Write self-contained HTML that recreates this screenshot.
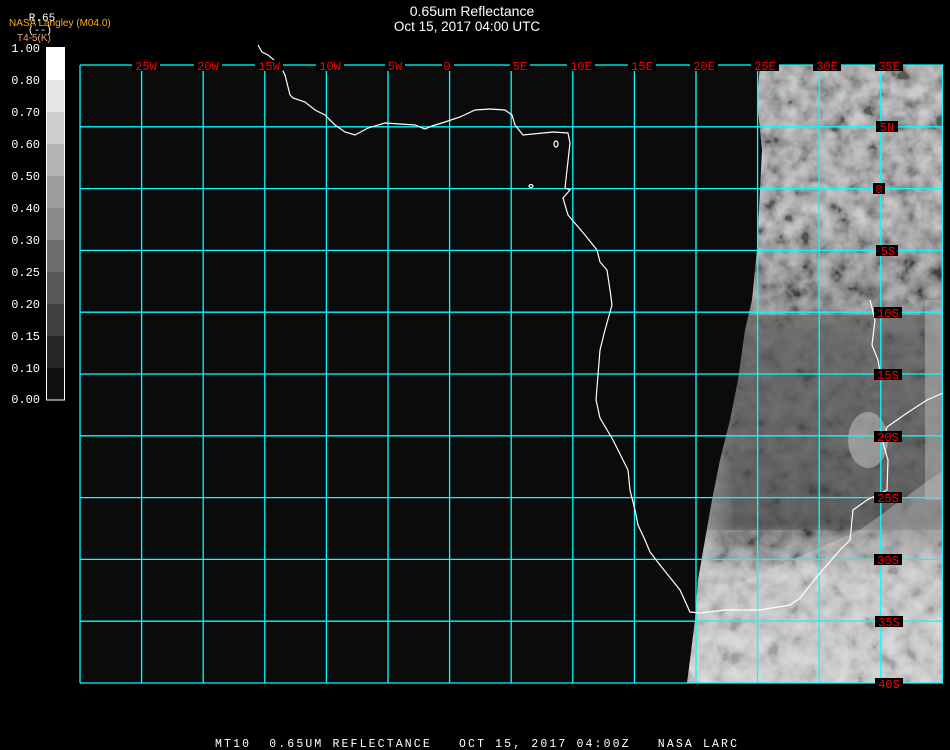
<!DOCTYPE html>
<html><head><meta charset="utf-8"><style>
html,body{margin:0;padding:0;background:#000;width:950px;height:750px;overflow:hidden}
svg{display:block}
</style></head><body>
<svg width="950" height="750" viewBox="0 0 950 750" xmlns="http://www.w3.org/2000/svg">
<defs>
<linearGradient id="g" x1="0" y1="0" x2="0" y2="1">
<stop offset="0" stop-color="#a0a0a0"/>
<stop offset="0.25" stop-color="#a0a0a0"/>
<stop offset="0.33" stop-color="#7a7a7a"/>
<stop offset="0.45" stop-color="#5e5e5e"/>
<stop offset="0.62" stop-color="#585858"/>
<stop offset="0.74" stop-color="#505050"/>
<stop offset="0.82" stop-color="#b8b8b8"/>
<stop offset="1" stop-color="#c8c8c8"/>
</linearGradient>
<linearGradient id="edge" x1="0" y1="0" x2="1" y2="0">
<stop offset="0" stop-color="#ccc" stop-opacity="0.7"/>
<stop offset="1" stop-color="#ccc" stop-opacity="0"/>
</linearGradient>
<filter id="t" x="0" y="0" width="100%" height="100%">
<feTurbulence type="fractalNoise" baseFrequency="0.06" numOctaves="3" seed="4"/>
<feColorMatrix type="matrix" values="0.33 0.33 0.33 0 0 0.33 0.33 0.33 0 0 0.33 0.33 0.33 0 0 0 0 0 0 1"/>
<feComponentTransfer><feFuncR type="linear" slope="3" intercept="-1"/><feFuncG type="linear" slope="3" intercept="-1"/><feFuncB type="linear" slope="3" intercept="-1"/></feComponentTransfer>
</filter>
<clipPath id="c"><polygon points="760,65 757,100 762,150 760,190 757,250 752,300 745,330 738,380 730,420 720,460 712,500 705,540 698,580 695,620 690,660 687,683 943,683 943,65"/></clipPath>
</defs>
<rect x="80" y="65" width="863" height="618" fill="#0b0b0b"/>
<g clip-path="url(#c)">
<rect x="680" y="65" width="270" height="620" fill="url(#g)"/>
<rect x="680" y="65" width="270" height="250" filter="url(#t)" opacity="0.45"/>
<rect x="680" y="530" width="270" height="155" filter="url(#t)" opacity="0.35"/>
<rect x="680" y="315" width="270" height="215" filter="url(#t)" opacity="0.12"/>
<rect x="690" y="280" width="45" height="300" fill="url(#edge)"/>
<ellipse cx="868" cy="440" rx="20" ry="28" fill="#ccc" opacity="0.5"/>
<polygon points="700,600 860,530 943,470 943,683 690,683" fill="#ddd" opacity="0.35"/>
<rect x="925" y="300" width="18" height="200" fill="#bbb" opacity="0.5"/>
</g>
<g stroke="#00ffff" stroke-width="1.3" fill="none">
<path d="M80,65V683M141.6,65V683M203.2,65V683M264.8,65V683M326.4,65V683M388,65V683M449.6,65V683M511.2,65V683M572.8,65V683M634.4,65V683M696,65V683M757.6,65V683M819.2,65V683M880.8,65V683M942.4,65V683"/>
<path d="M80,65H943M80,126.8H943M80,188.6H943M80,250.4H943M80,312.2H943M80,374H943M80,435.8H943M80,497.6H943M80,559.4H943M80,621.2H943M80,683H943"/>
</g>
<g stroke="#fff" stroke-width="1.2" fill="none">
<polyline points="258,45 262,52 268,55 280,65 285,75 287,83 290,95 293,98 305,102 315,110 325,115 335,125 345,132 355,135 368,128 385,123 400,124 415,125 425,129 432,126 445,122 460,117 475,110 490,109 505,110 512,115 515,125 523,135 553,132 568,133 570,143 567,170 565,188 570,190 563,198 568,215 585,235 597,250 600,262 607,270 610,290 612,305 605,330 600,350 598,375 596,400 600,418 613,440 628,470 630,490 635,510 638,525 645,540 650,552 660,565 668,575 680,590 690,612 700,613 725,610 760,610 790,605 800,598 820,573 840,550 850,540 853,510 867,500 887,490 888,460 883,443 887,427 907,413 927,400 943,393"/>
<ellipse cx="556" cy="144" rx="2" ry="3"/>
<ellipse cx="531" cy="186" rx="2" ry="1.5"/>
<polyline points="870,300 875,320 872,345 878,360 880,372"/>
</g>
<g font-family="Liberation Mono, monospace" font-size="12" fill="#ff0000" text-anchor="middle">
<g fill="#000"><rect x="132" y="60" width="28" height="11"/><rect x="194" y="60" width="28" height="11"/><rect x="255" y="60" width="28" height="11"/><rect x="316" y="60" width="28" height="11"/><rect x="385" y="60" width="20" height="11"/><rect x="442" y="60" width="12" height="11"/><rect x="510" y="60" width="20" height="11"/><rect x="567" y="60" width="28" height="11"/><rect x="628" y="60" width="28" height="11"/><rect x="690" y="60" width="28" height="11"/><rect x="751" y="60" width="28" height="11"/><rect x="813" y="60" width="28" height="11"/><rect x="875" y="60" width="28" height="11"/>
<rect x="876" y="121" width="22" height="11"/><rect x="873" y="183" width="12" height="11"/><rect x="876" y="245" width="22" height="11"/><rect x="874" y="307" width="28" height="11"/><rect x="874" y="369" width="28" height="11"/><rect x="874" y="431" width="28" height="11"/><rect x="874" y="492" width="28" height="11"/><rect x="874" y="554" width="28" height="11"/><rect x="875" y="616" width="28" height="11"/><rect x="875" y="678" width="28" height="11"/></g>
<text x="146" y="70">25W</text><text x="208" y="70">20W</text><text x="269" y="70">15W</text><text x="330" y="70">10W</text><text x="395" y="70">5W</text><text x="447" y="70">0</text><text x="520" y="70">5E</text><text x="581" y="70">10E</text><text x="642" y="70">15E</text><text x="704" y="70">20E</text><text x="765" y="70">25E</text><text x="827" y="70">30E</text><text x="889" y="70">35E</text>
<text x="887" y="131">5N</text><text x="879" y="193">0</text><text x="888" y="255">5S</text><text x="888" y="317">10S</text><text x="888" y="379">15S</text><text x="888" y="441">20S</text><text x="888" y="502">25S</text><text x="888" y="564">30S</text><text x="889" y="626">35S</text><text x="889" y="688">40S</text>
</g>
<g font-family="Liberation Sans, sans-serif" fill="#fff" text-anchor="middle">
<text x="472" y="16" font-size="14">0.65um Reflectance</text>
<text x="467" y="31" font-size="13.5">Oct 15, 2017 04:00 UTC</text>
</g>
<text x="42" y="21" font-family="Liberation Mono, monospace" font-size="11" fill="#fff" text-anchor="middle">R.65</text>
<text x="9" y="26" font-family="Liberation Sans, sans-serif" font-size="10" fill="#ffb000">NASA Langley (M04.0)</text>
<text x="40" y="33" font-family="Liberation Mono, monospace" font-size="10" fill="#fff" text-anchor="middle">(--)</text>
<text x="17" y="41" font-family="Liberation Sans, sans-serif" font-size="10" fill="#f4a070">T4-5(K)</text>
<g>
<rect x="46" y="47" width="19" height="33" fill="#fff"/>
<rect x="46" y="80" width="19" height="32" fill="#e5e5e5"/>
<rect x="46" y="112" width="19" height="32" fill="#cfcfcf"/>
<rect x="46" y="144" width="19" height="32" fill="#b4b4b4"/>
<rect x="46" y="176" width="19" height="32" fill="#9c9c9c"/>
<rect x="46" y="208" width="19" height="32" fill="#8a8a8a"/>
<rect x="46" y="240" width="19" height="32" fill="#6e6e6e"/>
<rect x="46" y="272" width="19" height="32" fill="#575757"/>
<rect x="46" y="304" width="19" height="32" fill="#404040"/>
<rect x="46" y="336" width="19" height="32" fill="#262626"/>
<rect x="46" y="368" width="19" height="32" fill="#111"/>
<rect x="46.5" y="47.5" width="18" height="352.5" fill="none" stroke="#fff" stroke-width="1"/>
</g>
<g font-family="Liberation Mono, monospace" font-size="12" fill="#fff" text-anchor="end">
<text x="40" y="52">1.00</text><text x="40" y="84">0.80</text><text x="40" y="116">0.70</text><text x="40" y="148">0.60</text><text x="40" y="180">0.50</text><text x="40" y="212">0.40</text><text x="40" y="244">0.30</text><text x="40" y="276">0.25</text><text x="40" y="308">0.20</text><text x="40" y="340">0.15</text><text x="40" y="372">0.10</text><text x="40" y="403">0.00</text>
</g>
<text x="215" y="747" font-family="Liberation Mono, monospace" font-size="11.5" fill="#fff" textLength="522" xml:space="preserve">MT10  0.65UM REFLECTANCE   OCT 15, 2017 04:00Z   NASA LARC</text>
</svg>
</body></html>
